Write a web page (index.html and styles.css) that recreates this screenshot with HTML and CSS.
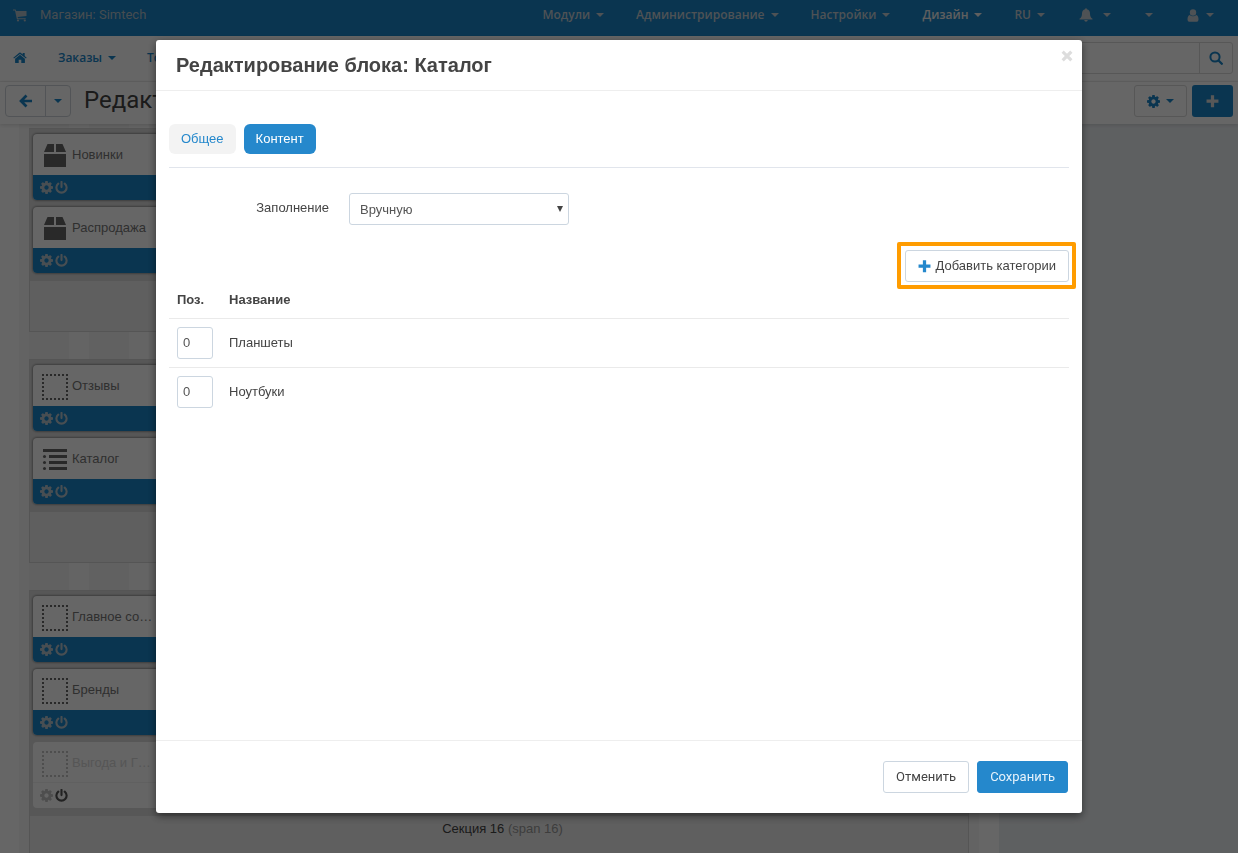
FILE: index.html
```html
<!DOCTYPE html>
<html lang="ru">
<head>
<meta charset="utf-8">
<title>Редактирование блока: Каталог</title>
<link rel="stylesheet" href="styles.css">
</head>
<body>
<svg class="defs" aria-hidden="true">
  <symbol id="gear" viewBox="0 0 1536 1536"><path d="M1024 768q0-106-75-181t-181-75-181 75-75 181 75 181 181 75 181-75 75-181zm512-109v222q0 12-8 23t-20 13l-185 28q-19 54-39 91 35 50 107 138 10 12 10 25t-9 23q-27 37-99 108t-94 71q-12 0-26-9l-138-108q-44 23-91 38-16 136-29 186-7 28-36 28H657q-14 0-24.500-8.500T621 1506l-28-184q-49-16-90-37l-141 107q-10 9-25 9-14 0-25-11-126-114-165-168-7-10-7-23 0-12 8-23 15-21 51-66.500t54-70.500q-27-50-41-99L29 913q-13-2-21-12.500T0 877V655q0-12 8-23t19-13l186-28q14-46 39-92-40-57-107-138-10-12-10-24 0-10 9-23 26-36 98.500-107.500T337 135q13 0 26 10l138 107q44-23 91-38 16-136 29-186 7-28 36-28h222q14 0 24.500 8.500T915 30l28 184q49 16 90 37l142-107q9-9 24-9 13 0 25 10 129 119 165 170 7 8 7 22 0 12-8 23-15 21-51 66.500t-54 70.500q26 50 41 98l183 28q13 2 21 12.500t8 23.500z"/></symbol>
  <symbol id="power" viewBox="0 0 13 13"><path d="M3.300 2.600A5.100 5.100 0 1 0 9.700 2.600M6.500 .9v5.200" fill="none" stroke="currentColor" stroke-width="2.100" stroke-linecap="round"/></symbol>
  <symbol id="plus" viewBox="0 0 12 12"><path d="M4.500 0.200h3v4h4v3h-4v4h-3v-4h-4v-3h4z"/></symbol>
  <symbol id="cart" viewBox="0 0 14 13"><path d="M0 .5h2.600l.6 1.500H13.500v5L4.700 8.100l.2 1.100h7.800v1H3.900L2 1.500H0z"/><circle cx="5" cy="11.500" r="1.100"/><circle cx="11.800" cy="11.500" r="1.100"/></symbol>
  <symbol id="home" viewBox="0 0 14 12"><path d="M7 2.700 11.900 6.800V10.500q0 .5-.5.500H8.300V7.700H5.700V11H2.600q-.5 0-.5-.5V6.800z"/><path d="M.3 5.700 6.300.8q.7-.5 1.400 0L9.700 2.500V1h2v3.100l2 1.600-.7.900L7 1.900 1 6.600z"/></symbol>
  <symbol id="arrow" viewBox="0 0 14 14"><path d="M7.500 1.500 2 7l5.500 5.500M3 7h10" fill="none" stroke="currentColor" stroke-width="2.700"/></symbol>
  <symbol id="search" viewBox="0 0 14 14"><circle cx="6" cy="6" r="4.600" fill="none" stroke="currentColor" stroke-width="2"/><path d="m9.500 9.500 3.300 3.300" stroke="currentColor" stroke-width="2.300" stroke-linecap="round"/></symbol>
  <symbol id="bell" viewBox="0 0 14 14"><path d="M7 .3q.9 0 .9 1Q11 2 11 5.500q0 3.900 2.500 5.300v.7H.5v-.7Q3 9.400 3 5.500 3 2 6.100 1.300q0-1 .9-1zM5.200 12h3.600Q8.500 13.700 7 13.700T5.200 12z"/></symbol>
  <symbol id="user" viewBox="0 0 12 13"><circle cx="6" cy="3.500" r="3.200"/><path d="M2.800 6q1.200 1.300 3.200 1.300T9.200 6Q11.500 6.500 11.500 10.500 11.500 12.700 9.800 12.700H2.200Q.5 12.700.5 10.500.5 6.500 2.800 6z"/></symbol>
  <symbol id="close" viewBox="0 0 12 12"><path d="m2.800 2.800 6.400 6.400m0-6.400-6.400 6.400" stroke="currentColor" stroke-width="3.200" stroke-linecap="square"/></symbol>
  <symbol id="box" viewBox="0 0 26 26"><path d="M5.500 1H12v8H2zM14 1h6.500L24 9H14zM2 11h22v13H2z"/></symbol>
  <symbol id="dotted" viewBox="0 0 26 26"><rect x="1" y="1" width="24" height="24" fill="none" stroke="currentColor" stroke-width="2" stroke-dasharray="2 2" stroke-dashoffset="1"/></symbol>
  <symbol id="list" viewBox="0 0 26 26"><path d="M1 2h24v3H1zM7 8h18v3H7zM7 14h18v3H7zM7 20h18v3H7z"/><circle cx="2.500" cy="9.500" r="1.500"/><circle cx="2.500" cy="15.500" r="1.500"/><circle cx="2.500" cy="21.500" r="1.500"/></symbol>
</svg>

<div class="page">
  <header class="topbar">
    <a class="store" href="#"><svg class="icon-cart"><use href="#cart"/></svg>Магазин: Simtech</a>
    <nav class="topmenu">
      <a href="#">Модули<i class="caret"></i></a>
      <a href="#">Администрирование<i class="caret"></i></a>
      <a href="#">Настройки<i class="caret"></i></a>
      <a class="current" href="#">Дизайн<i class="caret"></i></a>
      <a href="#">RU<i class="caret"></i></a>
      <a class="tool" href="#" aria-label="Уведомления"><svg class="icon14"><use href="#bell"/></svg><i class="caret"></i></a>
      <a class="tool" href="#" aria-label="Меню"><i class="caret"></i></a>
      <a class="tool profile" href="#" aria-label="Профиль"><svg class="icon-user"><use href="#user"/></svg><i class="caret"></i></a>
    </nav>
  </header>

  <div class="subnav">
    <nav class="mainmenu">
      <a href="#" aria-label="Главная"><svg class="icon-home"><use href="#home"/></svg></a>
      <a href="#">Заказы<i class="caret"></i></a>
      <a href="#">То</a>
    </nav>
    <form class="search">
      <input type="text" aria-label="Поиск">
      <button type="button" aria-label="Найти"><svg class="icon14"><use href="#search"/></svg></button>
    </form>
  </div>

  <div class="actions">
    <div class="split">
      <button type="button" class="back" aria-label="Назад"><svg class="icon14"><use href="#arrow"/></svg></button>
      <button type="button" class="drop" aria-label="История"><i class="caret"></i></button>
    </div>
    <h1>Редакт</h1>
    <button type="button" class="settings" aria-label="Настройки"><svg class="icon13"><use href="#gear"/></svg><i class="caret"></i></button>
    <button type="button" class="create" aria-label="Добавить"><svg class="icon13"><use href="#plus"/></svg></button>
  </div>

  <div class="workspace">
    <main class="canvas">
      <section class="section">
        <div class="blocks">
          <article class="block"><div class="block-name"><svg class="icon26"><use href="#box"/></svg>Новинки</div><div class="block-tools"><svg class="icon13"><use href="#gear"/></svg><svg class="icon13"><use href="#power"/></svg></div></article>
          <article class="block"><div class="block-name"><svg class="icon26"><use href="#box"/></svg>Распродажа</div><div class="block-tools"><svg class="icon13"><use href="#gear"/></svg><svg class="icon13"><use href="#power"/></svg></div></article>
        </div>
        <div class="section-label"></div>
      </section>
      <section class="section">
        <div class="blocks">
          <article class="block"><div class="block-name"><svg class="icon26"><use href="#dotted"/></svg>Отзывы</div><div class="block-tools"><svg class="icon13"><use href="#gear"/></svg><svg class="icon13"><use href="#power"/></svg></div></article>
          <article class="block"><div class="block-name"><svg class="icon26"><use href="#list"/></svg>Каталог</div><div class="block-tools"><svg class="icon13"><use href="#gear"/></svg><svg class="icon13"><use href="#power"/></svg></div></article>
        </div>
        <div class="section-label"></div>
      </section>
      <section class="section">
        <div class="blocks">
          <article class="block"><div class="block-name"><svg class="icon26"><use href="#dotted"/></svg>Главное со…</div><div class="block-tools"><svg class="icon13"><use href="#gear"/></svg><svg class="icon13"><use href="#power"/></svg></div></article>
          <article class="block"><div class="block-name"><svg class="icon26"><use href="#dotted"/></svg>Бренды</div><div class="block-tools"><svg class="icon13"><use href="#gear"/></svg><svg class="icon13"><use href="#power"/></svg></div></article>
          <article class="block off"><div class="block-name"><svg class="icon26"><use href="#dotted"/></svg>Выгода и Г…</div><div class="block-tools"><svg class="icon13"><use href="#gear"/></svg><svg class="icon13 on"><use href="#power"/></svg></div></article>
        </div>
        <div class="section-label">Секция 16 <span>(span 16)</span></div>
      </section>
    </main>
    <aside class="sidebar"></aside>
  </div>
</div>

<div class="overlay">
  <div class="modal" role="dialog" aria-labelledby="modal-title">
    <div class="modal-head">
      <h2 id="modal-title">Редактирование блока: Каталог</h2>
      <button type="button" class="close" aria-label="Закрыть"><svg class="icon12"><use href="#close"/></svg></button>
    </div>
    <div class="modal-body">
      <div class="tabs">
        <button type="button">Общее</button>
        <button type="button" class="active">Контент</button>
      </div>
      <div class="field">
        <label for="filling">Заполнение</label>
        <div class="select"><select id="filling"><option>Вручную</option></select></div>
      </div>
      <div class="add-row">
        <div class="highlight"><button type="button" class="btn"><svg class="icon13"><use href="#plus"/></svg>Добавить категории</button></div>
      </div>
      <table>
        <thead><tr><th class="pos">Поз.</th><th>Название</th></tr></thead>
        <tbody>
          <tr><td><input type="text" value="0" aria-label="Позиция: Планшеты"></td><td>Планшеты</td></tr>
          <tr><td><input type="text" value="0" aria-label="Позиция: Ноутбуки"></td><td>Ноутбуки</td></tr>
        </tbody>
      </table>
    </div>
    <div class="modal-foot">
      <button type="button" class="btn">Отменить</button>
      <button type="button" class="btn primary">Сохранить</button>
    </div>
  </div>
</div>
</body>
</html>
```

FILE: styles.css
```css
* { box-sizing: border-box; }
body {
  margin: 0;
  background: #fff;
  color: #444;
  font: 13px/20px "Liberation Sans", Arial, sans-serif;
}
button, input, select { font: inherit; color: inherit; margin: 0; }
button { display: inline-flex; align-items: center; justify-content: center; padding: 0; background: none; border: 0; }
a { color: inherit; text-decoration: none; }
svg { fill: currentColor; flex: none; }
.defs { position: absolute; width: 0; height: 0; }
.icon12 { width: 12px; height: 12px; }
.icon13 { width: 13px; height: 13px; }
.icon14 { width: 14px; height: 14px; }
.icon26 { width: 26px; height: 26px; }
.icon-cart { width: 14px; height: 13px; }
.icon-home { width: 14px; height: 12px; }
.icon-user { width: 12px; height: 13px; }
.caret { border: 4px solid transparent; border-top-color: currentColor; border-bottom: 0; }

.page { height: 100vh; overflow: hidden; display: flex; flex-direction: column; }
.topbar {
  flex: none; height: 36px; padding: 0 24px 6px 13px;
  display: flex; align-items: center; justify-content: space-between;
  background: #1985c8; color: #c3cdd4;
}
.store { display: flex; align-items: center; gap: 13px; font-family: Roboto, sans-serif; color: #b0bfc9; }
.topmenu { display: flex; align-items: center; gap: 32px; font: 600 12px/20px "Open Sans", "Noto Sans", sans-serif; }
.topmenu a { display: flex; align-items: center; gap: 6px; }
.topmenu .current { color: #eee; }
.topmenu .tool { gap: 10px; margin-left: 2px; }
.topmenu .profile { gap: 7px; }

.subnav {
  flex: none; height: 46px; padding: 0 5px 2px 13px;
  display: flex; align-items: center; justify-content: space-between;
  border-bottom: 1px solid #f0f0f0;
}
.mainmenu { display: flex; align-items: center; gap: 31px; color: #1985c8; font: 600 12px/20px "Open Sans", "Noto Sans", sans-serif; }
.mainmenu a { display: flex; align-items: center; gap: 6px; }
.search { display: flex; width: 260px; height: 32px; border: 1px solid #d9d9d9; border-radius: 3px; color: #1985c8; }
.search input { flex: 1; min-width: 0; border: 0; background: none; }
.search button { width: 33px; border-left: 1px solid #d9d9d9; }

.actions {
  position: relative; flex: none; height: 42px; padding: 0 5px 4px;
  display: flex; align-items: center;
  box-shadow: 0 1px 4px rgba(0, 0, 0, .15); color: #1985c8;
}
.split { display: flex; height: 32px; border: 1px solid #ccd3d9; border-radius: 4px; }
.back { width: 39px; }
.drop { width: 25px; border-left: 1px solid #ccd3d9; }
.actions h1 { flex: 1; margin: 0 0 2px 13px; color: #444; font: 400 24px/32px Roboto, sans-serif; }
.settings { width: 53px; height: 32px; gap: 6px; border: 1px solid #d9d9d9; border-radius: 3px; }
.create { width: 41px; height: 32px; margin-left: 5px; border-radius: 3px; background: #1985c8; color: #ddd; }

.workspace { flex: 1; min-height: 0; display: flex; }
.canvas {
  flex: 1; padding: 4px 10px 0; margin: 0 20px 0 19px;
  background: repeating-linear-gradient(90deg, #f3f3f3 0 40px, #fafafa 40px 60px) 10px 0 / calc(100% - 20px) 100% no-repeat #f7f7f7;
}
.sidebar { width: 239px; background: #ecf0f3; }
.section { margin-bottom: 27px; border: 1px solid #d4d4d4; background: #eee; }
.blocks { display: grid; gap: 7px; padding: 5px 3px 8px; background: #dadada; }
.block { border-radius: 4px; background: #fff; box-shadow: 0 0 2px 1px rgba(0, 0, 0, .3); overflow: hidden; }
.block-name { display: flex; align-items: center; gap: 4px; height: 41px; padding: 1px 9px 0; color: #777; }
.block-name .icon26 { margin-top: 2px; color: #666; }
.block-tools { display: flex; align-items: center; gap: 2px; height: 25px; padding: 0 7px; background: #1985c8; color: #b5c3cc; }
.block.off { box-shadow: none; background: #fcfcfc; }
.off .block-name { border-bottom: 1px solid #f0f0f0; color: #d6d6d6; }
.off .icon26, .off .icon13 { color: #c2c2c2; }
.off .block-tools { background: none; }
.off .icon13.on { color: #555; }
.section-label { height: 50px; padding: 3px 0 0 7px; text-align: center; color: #444; }
.section-label span { color: #999; }

.overlay { position: fixed; inset: 0; padding: 40px 156px; display: flex; background: rgba(0, 0, 0, .6); }
.modal { flex: 1; min-width: 0; display: flex; flex-direction: column; border-radius: 3px; background: #fff; box-shadow: 0 3px 9px rgba(0, 0, 0, .5); }
.modal-head { display: flex; justify-content: space-between; padding: 10px 9px 10px 20px; border-bottom: 1px solid #eee; }
.modal-head h2 { margin: 0; font-size: 20px; line-height: 30px; }
.close { height: 12px; color: #ddd; }
.modal-body { flex: 1; padding: 33px 13px 0; }
.tabs { display: flex; gap: 8px; padding-bottom: 13px; border-bottom: 1px solid #e1e5ec; }
.tabs button { height: 30px; padding: 0 12px; border-radius: 6px; background: #f3f3f3; color: #2588cc; }
.tabs .active { background: #2588cc; color: #fff; }
.field { display: flex; gap: 20px; padding-top: 25px; }
.field label { width: 160px; padding-top: 5px; text-align: right; }
.select { position: relative; width: 220px; height: 32px; }
.select select { width: 100%; height: 100%; padding: 2px 10px 0; appearance: none; border: 1px solid #ccd6e0; border-radius: 3px; background: #fff; color: #555; }
.select::after { content: ""; position: absolute; top: 13px; right: 6px; border: 3px solid transparent; border-top: 6px solid #444; border-bottom: 0; pointer-events: none; }
.add-row { display: flex; justify-content: flex-end; margin: 17px -7px 0 0; }
.highlight { padding: 4px 3px 3px 4px; border: 4px solid #ff9c00; border-radius: 2px; }
.btn { height: 32px; gap: 5px; padding: 0 12px; border: 1px solid #ccd6e0; border-radius: 3px; background: #fff; color: #444; }
.btn svg { color: #2588cc; }
.primary { border-color: #2588cc; background: #2588cc; color: #e6f2fb; }
table { width: 100%; border-collapse: collapse; text-align: left; }
th { height: 29px; padding: 0 8px 6px; }
.pos { width: 52px; }
td { height: 49px; padding: 8px 8px 7px; border-top: 1px solid #eaeaea; }
td input { display: block; width: 36px; height: 32px; padding: 0 5px 2px; border: 1px solid #ccd6e0; border-radius: 3px; color: #555; }
.modal-foot { display: flex; justify-content: flex-end; gap: 8px; padding: 20px 14px; border-top: 1px solid #eee; font-family: Roboto, sans-serif; }
```
